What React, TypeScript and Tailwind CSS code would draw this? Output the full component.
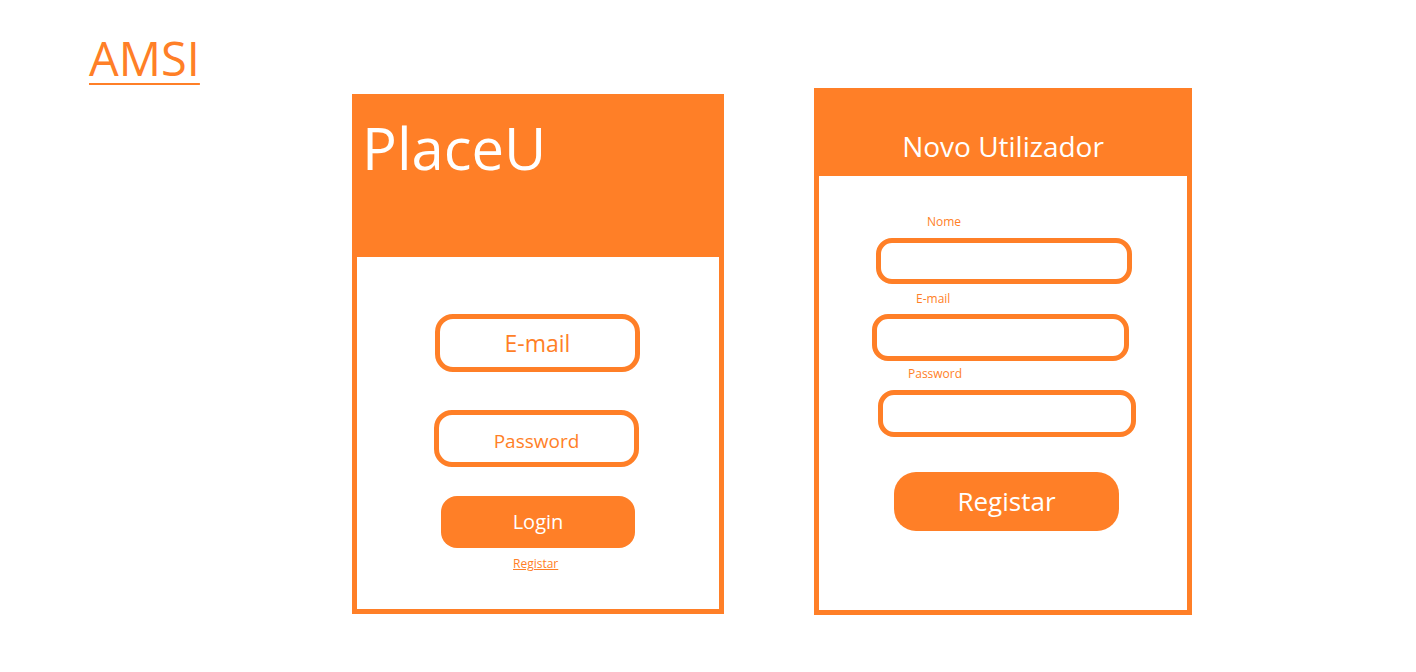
import React from "react";

export default function App() {
  return (
    <div
      className="w-[1416px] h-[672px] bg-white overflow-hidden"
      style={{ fontFamily: '"Open Sans", "Noto Sans", sans-serif' }}
    >
      <div className="h-[88px] pl-[89px] pt-[32px]">
        <a href="#" className="text-[47px] leading-[52px] text-[#FF7F27] underline decoration-[2px] underline-offset-[7px]">
          AMSI
        </a>
      </div>
      <div className="flex items-start pl-[352px]">
        {/* Login card */}
        <div className="mt-[6px] w-[372px] h-[520px] border-[5px] border-[#FF7F27] flex flex-col">
          <div className="h-[158px] bg-[#FF7F27] pl-[5px] pt-[14px]">
            <div className="text-[58px] leading-[70px] text-white">PlaceU</div>
          </div>
          <div className="flex-1 bg-white flex flex-col">
            <div className="mt-[57px] ml-[78px] w-[205px] h-[58px] border-[5px] border-[#FF7F27] rounded-[18px] flex items-center justify-center text-[23px] text-[#FF7F27]">
              E-mail
            </div>
            <div className="mt-[38px] ml-[77px] w-[205px] h-[57px] border-[5px] border-[#FF7F27] rounded-[18px] flex items-center justify-center pt-[5px] text-[19px] text-[#FF7F27]">
              Password
            </div>
            <div className="mt-[29px] ml-[84px] w-[194px] h-[52px] bg-[#FF7F27] rounded-[16px] flex items-center justify-center text-[20px] text-white">
              Login
            </div>
            <a href="#" className="mt-[6px] self-start ml-[156px] text-[12px] leading-[20px] text-[#FF7F27] underline">
              Registar
            </a>
          </div>
        </div>

        {/* Register card */}
        <div className="ml-[90px] w-[378px] h-[527px] border-[5px] border-[#FF7F27] flex flex-col">
          <div className="h-[83px] bg-[#FF7F27] flex justify-center pt-[33px]">
            <div className="text-[28px] leading-[40px] text-white">Novo Utilizador</div>
          </div>
          <div className="flex-1 bg-white flex flex-col">
            <div className="mt-[37px] ml-[108px] text-[12px] leading-[18px] text-[#FF7F27]">Nome</div>
            <div className="mt-[7px] ml-[57px] w-[256px] h-[46px] border-[5px] border-[#FF7F27] rounded-[16px]" />
            <div className="mt-[6px] ml-[97px] text-[12px] leading-[18px] text-[#FF7F27]">E-mail</div>
            <div className="mt-[6px] ml-[53px] w-[257px] h-[47px] border-[5px] border-[#FF7F27] rounded-[16px]" />
            <div className="mt-[4px] ml-[89px] text-[12px] leading-[18px] text-[#FF7F27]">Password</div>
            <div className="mt-[7px] ml-[59px] w-[258px] h-[47px] border-[5px] border-[#FF7F27] rounded-[16px]" />
            <div className="mt-[35px] ml-[75px] w-[225px] h-[59px] bg-[#FF7F27] rounded-[22px] flex items-center justify-center text-[26px] text-white">
              Registar
            </div>
          </div>
        </div>
      </div>
    </div>
  );
}
